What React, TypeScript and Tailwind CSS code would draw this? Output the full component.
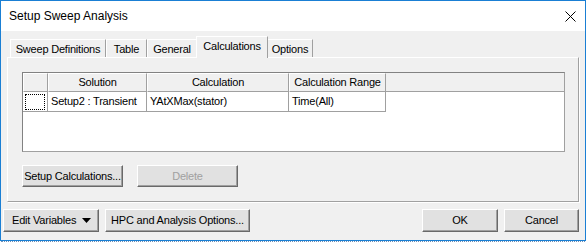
import type { ReactNode } from "react";

const ui = "font-['Liberation_Sans',Arial,sans-serif] text-[11px] tracking-[-0.2px] whitespace-nowrap text-black";

function Btn({ children, className = "", disabled = false }: { children: ReactNode; className?: string; disabled?: boolean }) {
  return (
    <div
      className={`flex items-center justify-center border border-t-white border-l-white border-r-[#696969] border-b-[#696969] bg-[#e1e1e1] shadow-[inset_-1px_-1px_0_#a0a0a0] ${
        disabled ? "text-[#a0a0a0]" : "text-black"
      } ${className}`}
    >
      {children}
    </div>
  );
}

function Tab({ label, active = false, w }: { label: string; active?: boolean; w: string }) {
  return (
    <div
      className={`flex items-center justify-center border-l border-t border-r border-l-white border-t-white border-r-[#a0a0a0] bg-[#f0f0f0] ${w} ${
        active ? "z-10 -mx-px h-[22px] pb-[3px]" : "h-[19px]"
      }`}
    >
      {label}
    </div>
  );
}

function HeadCell({ children, w }: { children?: ReactNode; w: string }) {
  return (
    <div className={`flex h-full items-center justify-center border-r border-b border-r-[#a0a0a0] border-b-[#a0a0a0] border-l border-t border-l-white border-t-white bg-[#f0f0f0] ${w}`}>
      {children}
    </div>
  );
}

function DataCell({ children, w }: { children?: ReactNode; w: string }) {
  return (
    <div className={`flex h-full items-center border-r border-b border-[#a0a0a0] pl-[3px] ${w}`}>{children}</div>
  );
}

export default function App() {
  return (
    <div className={`${ui} flex h-[245px] w-[586px] flex-col bg-white`}>
      <div className="flex h-[241px] flex-col border border-[#1a7fd4]">
        <div className="flex h-[30px] items-center justify-between bg-white pl-[8px] pr-[9px]">
          <span className="font-['Liberation_Sans',Arial,sans-serif] text-[12px] tracking-normal">Setup Sweep Analysis</span>
          <svg width="11" height="11" viewBox="0 0 11 11">
            <path d="M0.5 0.5L10.5 10.5M10.5 0.5L0.5 10.5" stroke="#000" strokeWidth="1" />
          </svg>
        </div>
        <div className="flex flex-1 flex-col bg-[#f0f0f0]">
          <div className="-mb-px flex h-[27px] items-end pl-[9px]">
            <Tab label="Sweep Definitions" w="w-[96px]" />
            <Tab label="Table" w="w-[41px]" />
            <Tab label="General" w="w-[50px]" />
            <Tab label="Calculations" w="w-[72px]" active />
            <Tab label="Options" w="w-[46px]" />
          </div>
          <div className="mx-[6px] flex h-[145px] flex-col border border-t-white border-l-white border-r-[#a0a0a0] border-b-[#a0a0a0] px-[14px] pt-[14px] shadow-[1px_1px_0_#ffffff]">
            <div className="flex h-[80px] w-[543px] flex-col border border-l-[#828282] border-t-[#828282] border-r-[#a0a0a0] border-b-[#a0a0a0] bg-white">
              <div className="flex h-[19px]">
                <HeadCell w="w-[25px]" />
                <HeadCell w="w-[99px]">Solution</HeadCell>
                <HeadCell w="w-[142px]">Calculation</HeadCell>
                <HeadCell w="w-[97px]">Calculation Range</HeadCell>
                <div className="h-full flex-1 border-b border-[#a0a0a0] bg-[#f0f0f0]" />
              </div>
              <div className="flex h-[20px]">
                <div className="flex h-full w-[25px] items-center justify-center border-r border-b border-[#a0a0a0]">
                  <div className="h-[16px] w-[20px] border border-dotted border-black" />
                </div>
                <DataCell w="w-[99px]">Setup2 : Transient</DataCell>
                <DataCell w="w-[142px]">YAtXMax(stator)</DataCell>
                <DataCell w="w-[97px]">Time(All)</DataCell>
              </div>
            </div>
            <div className="mt-[13px] flex gap-[14px]">
              <Btn className="h-[22px] w-[101px]">Setup Calculations...</Btn>
              <Btn className="h-[22px] w-[101px]" disabled>
                Delete
              </Btn>
            </div>
          </div>
          <div className="mt-[7px] flex items-start pl-[2px] pr-[6px]">
            <Btn className="h-[23px] w-[96px] justify-start gap-[6px] pl-[8px]">
              <span>Edit Variables</span>
              <svg width="9" height="5" viewBox="0 0 9 5">
                <path d="M0 0H9L4.5 5Z" fill="#000" />
              </svg>
            </Btn>
            <Btn className="ml-[6px] h-[23px] w-[145px]">HPC and Analysis Options...</Btn>
            <div className="flex-1" />
            <Btn className="h-[23px] w-[76px]">OK</Btn>
            <Btn className="ml-[6px] h-[23px] w-[75px]">Cancel</Btn>
          </div>
        </div>
      </div>
      <div className="mx-[1px] border-t border-dotted border-[#6e8fb5]" />
    </div>
  );
}
